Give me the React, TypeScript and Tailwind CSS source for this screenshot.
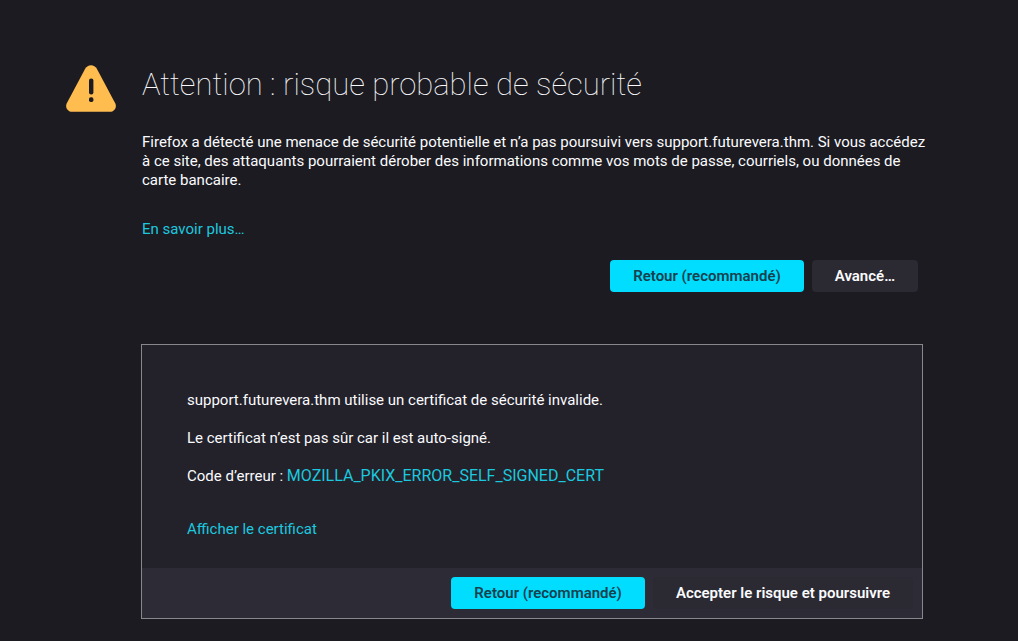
import React from "react";

function WarningIcon() {
  return (
    <svg viewBox="0 0 50 48" className="h-12 w-[50px] shrink-0" aria-hidden="true">
      <path d="M25 1.200c2.400 0 4.500 1.300 5.700 3.400L49.200 39.200c2 4-.8 8.600-5.300 8.600H6.100C1.600 47.800-1.200 43.200.8 39.200L19.300 4.600C20.500 2.500 22.600 1.200 25 1.200Z" fill="#ffbd4f" />
      <rect x="23" y="14.600" width="4.400" height="15.800" rx="2" fill="#1c1b22" />
      <rect x="23" y="33.300" width="4.400" height="4.600" rx="1.700" fill="#1c1b22" />
    </svg>
  );
}

function Button({ children, primary = false }: { children: React.ReactNode; primary?: boolean }) {
  return (
    <button
      type="button"
      className={`h-8 rounded px-[23px] text-[15px] leading-5 font-semibold ${primary ? "bg-[#00ddff] text-[#15414e]" : "bg-[#2b2a33] text-[#fbfbfe]"}`}
    >
      {children}
    </button>
  );
}

export default function App() {
  return (
    <main className="min-h-screen bg-[#1c1b22] pt-16 pr-[95px] pb-[22px] pl-[66px] font-['Roboto','Noto_Sans',sans-serif] text-[15px] leading-[19px] text-[#fbfbfe]">
      <div className="flex items-start gap-[25px]">
        <WarningIcon />
        <div className="min-w-0 flex-1">
          <div className="-mr-1 pt-px pl-px">
            <h1 className="text-[31px] leading-10 font-thin">Attention : risque probable de sécurité</h1>
            <p className="mt-7">
              Firefox a détecté une menace de sécurité potentielle et n’a pas poursuivi vers support.futurevera.thm. Si vous accédez à ce site, des attaquants pourraient dérober des informations comme vos mots de passe, courriels, ou données de carte bancaire.
            </p>
            <a href="#" className="mt-[30px] block w-fit text-[#1cc8df]">En savoir plus…</a>
          </div>
          <div className="mt-[21px] flex justify-end gap-2 pr-[5px]">
            <Button primary>Retour (recommandé)</Button>
            <Button>Avancé…</Button>
          </div>
          <section className="mt-[52px] border border-[#87878c] bg-[#23222b]">
            <div className="flex flex-col gap-[19px] px-[45px] pt-[46px] pb-[29px]">
              <p>support.futurevera.thm utilise un certificat de sécurité invalide.</p>
              <p>Le certificat n’est pas sûr car il est auto-signé.</p>
              <p>Code d’erreur : <a href="#" className="text-[16px] leading-4 text-[#1cc8df]">MOZILLA_PKIX_ERROR_SELF_SIGNED_CERT</a></p>
              <a href="#" className="mt-[15px] w-fit text-[#1cc8df]">Afficher le certificat</a>
            </div>
            <div className="flex justify-end gap-2 bg-[#2d2c36] px-[9px] py-[9px]">
              <Button primary>Retour (recommandé)</Button>
              <Button>Accepter le risque et poursuivre</Button>
            </div>
          </section>
        </div>
      </div>
    </main>
  );
}
